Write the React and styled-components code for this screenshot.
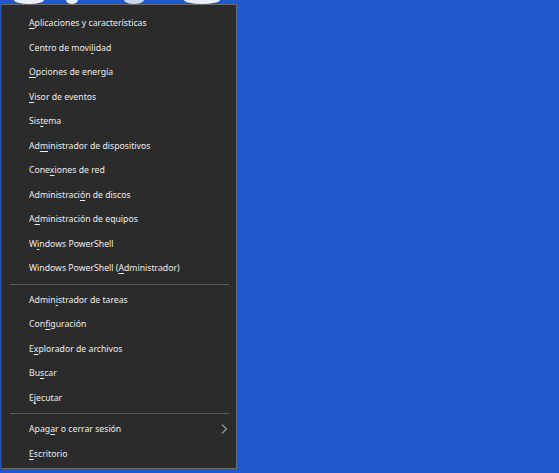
import React from 'react'
import styled, { createGlobalStyle } from 'styled-components'

const GlobalStyle = createGlobalStyle`
    html, body {
        margin: 0;
        padding: 0;
        background: #1f59cb;
    }
`

const Desktop = styled.div`
    width: 559px;
    height: 473px;
    background: #1f59cb;
    overflow: hidden;
    display: flex;
    flex-direction: column;
`

const IconStrip = styled.div`
    height: 4px;
    display: flex;
    overflow: hidden;
`

const IconPeek = styled.span`
    display: block;
    margin-left: ${props => props.left}px;
    width: ${props => props.w}px;
    height: 8px;
    margin-top: -4px;
    border-radius: 0 0 50% 50%;
    background: ${props => props.color || '#e9eef8'};
`

const Menu = styled.div`
    margin-left: 1px;
    width: 236px;
    height: 465px;
    box-sizing: border-box;
    background: #2b2b2b;
    border: 1px solid #6b6b6b;
    border-left-color: #3c3c3c;
    display: flex;
    flex-direction: column;
    padding-top: 6px;
    font-family: "Noto Sans", "Open Sans", sans-serif;
    font-size: 8.7px;
    color: #ececec;
`

const Item = styled.div`
    height: 24.5px;
    display: flex;
    align-items: center;
    justify-content: space-between;
    padding: 0 8px 0 27px;
    white-space: nowrap;
    u {
        text-decoration: underline;
        text-underline-offset: 1.5px;
    }
`

const Separator = styled.div`
    height: 1px;
    margin: 3px 7px 3px 8px;
    background: #5a5a5a;
`

const Chevron = () => (
    <svg width="8" height="12" viewBox="0 0 8 12">
        <path d="M2 1.5 L6.5 6 L2 10.5" fill="none" stroke="#9a9a9a" strokeWidth="1.2" />
    </svg>
)

const Label = ({ text, at }) => (
    <span>
        {text.slice(0, at)}
        <u>{text[at]}</u>
        {text.slice(at + 1)}
    </span>
)

const groupA = [
    ['Aplicaciones y características', 0],
    ['Centro de movilidad', 14],
    ['Opciones de energía', 0],
    ['Visor de eventos', 0],
    ['Sistema', 3],
    ['Administrador de dispositivos', 2],
    ['Conexiones de red', 4],
    ['Administración de discos', 12],
    ['Administración de equipos', 1],
    ['Windows PowerShell', 1],
    ['Windows PowerShell (Administrador)', 20],
]

const groupB = [
    ['Administrador de tareas', 5],
    ['Configuración', 3],
    ['Explorador de archivos', 1],
    ['Buscar', 2],
    ['Ejecutar', 1],
]

export default function App() {
    return (
        <Desktop>
            <GlobalStyle />
            <IconStrip>
                <IconPeek left={14} w={30} />
                <IconPeek left={22} w={12} />
                <IconPeek left={46} w={20} color="#c9d6ee" />
                <IconPeek left={40} w={36} />
            </IconStrip>
            <Menu>
                {groupA.map(([t, k]) => (
                    <Item key={t}><Label text={t} at={k} /></Item>
                ))}
                <Separator />
                {groupB.map(([t, k]) => (
                    <Item key={t}><Label text={t} at={k} /></Item>
                ))}
                <Separator />
                <Item>
                    <Label text="Apagar o cerrar sesión" at={4} />
                    <Chevron />
                </Item>
                <Item><Label text="Escritorio" at={0} /></Item>
            </Menu>
        </Desktop>
    )
}
